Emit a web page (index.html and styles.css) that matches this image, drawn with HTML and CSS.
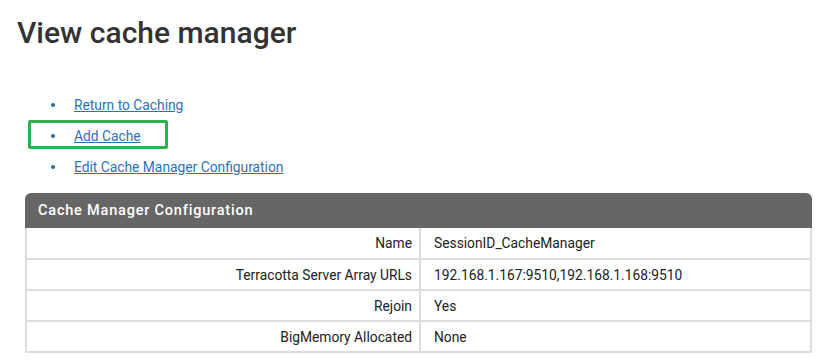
FILE: index.html
```html
<!DOCTYPE html>
<html lang="en">
<head>
    <meta charset="UTF-8">
    <title>View cache manager</title>
    <link rel="stylesheet" href="styles.css">
</head>
<body>
    <div class="page">
        <h1 class="page-title">View cache manager</h1>

        <!-- Actions -->
        <ul class="action-list">
            <li><a href="#">Return to Caching</a></li>
            <li class="highlight"><a href="#">Add Cache</a></li>
            <li><a href="#">Edit Cache Manager Configuration</a></li>
        </ul>

        <!-- Configuration table -->
        <div class="panel">
            <div class="panel-header">Cache Manager Configuration</div>
            <table class="config-table">
                <tr>
                    <td class="label-col">Name</td>
                    <td>SessionID_CacheManager</td>
                </tr>
                <tr>
                    <td class="label-col">Terracotta Server Array URLs</td>
                    <td>192.168.1.167:9510,192.168.1.168:9510</td>
                </tr>
                <tr>
                    <td class="label-col">Rejoin</td>
                    <td>Yes</td>
                </tr>
                <tr>
                    <td class="label-col">BigMemory Allocated</td>
                    <td>None</td>
                </tr>
            </table>
        </div>
    </div>
</body>
</html>
```

FILE: styles.css
```css
* {
    margin: 0;
    padding: 0;
    box-sizing: border-box;
}

body {
    font-family: Roboto, "Liberation Sans", sans-serif;
    font-size: 13.8px;
    color: #222;
    background: white;
}

.page {
    padding: 13px 25px 0 25px;
}

.page-title {
    font-size: 30px;
    font-weight: 500;
    color: #333;
    margin-left: -8px;
    line-height: 40px;
}

.action-list {
    margin-top: 36px;
    padding-left: 26px;
    list-style: none;
}

.action-list li {
    display: flex;
    align-items: center;
    height: 31px;
    position: relative;
}

.action-list li::before {
    content: "";
    width: 4px;
    height: 4px;
    border-radius: 50%;
    background: #1b6c9c;
    margin-right: 19px;
    flex-shrink: 0;
}

.action-list a {
    color: #2b72bd;
    text-decoration: underline;
}

.action-list li.highlight::after {
    content: "";
    box-sizing: border-box;
    position: absolute;
    left: -23px;
    top: 0;
    width: 140px;
    height: 29px;
    border: 3px solid #2bb24c;
    border-radius: 2px;
}

.panel {
    margin-top: 11px;
}

.panel-header {
    background: #666;
    color: white;
    font-size: 14.5px;
    font-weight: 500;
    letter-spacing: 0.8px;
    height: 35px;
    line-height: 35px;
    padding-left: 13px;
    border-radius: 6px 6px 0 0;
}

.config-table {
    width: 100%;
    border-collapse: collapse;
}

.config-table td {
    height: 31px;
    padding: 0 13px;
    border: 2px solid #ddd;
    vertical-align: middle;
    color: #222;
}

.config-table tr:first-child td {
    border-top: none;
}

.config-table .label-col {
    width: 394px;
    text-align: right;
    padding-right: 7px;
}
```
